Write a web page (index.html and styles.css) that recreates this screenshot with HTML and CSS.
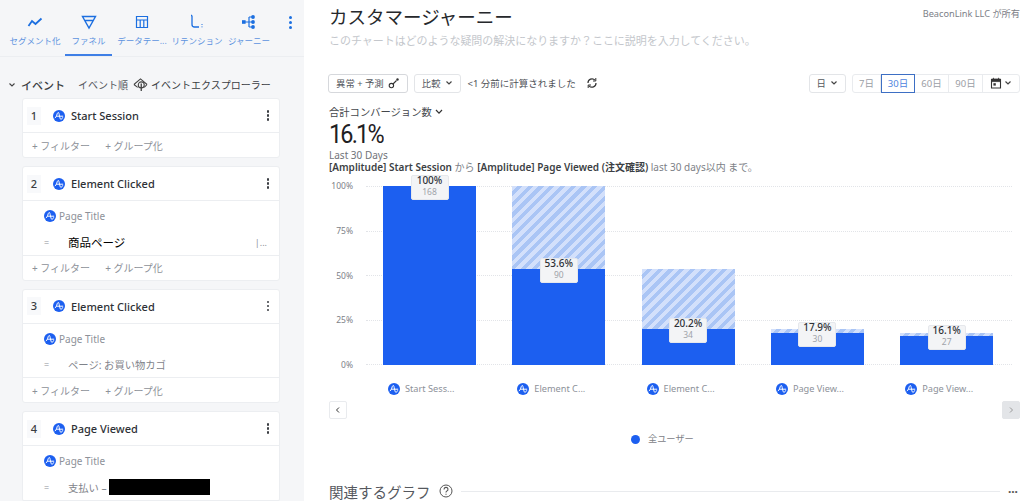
FILE: index.html
```html
<!DOCTYPE html>
<html lang="ja">
<head>
  <meta charset="UTF-8">
  <meta name="viewport" content="width=device-width, initial-scale=1.0">
  <title>カスタマージャーニー</title>
  <link rel="stylesheet" href="styles.css">
</head>
<body>
  <svg class="defs" width="0" height="0">
    <symbol id="amp" viewBox="0 0 12 12">
      <circle cx="6" cy="6" r="6" fill="#1c5ff0"/>
      <path d="M1.8 8 C3.6 8 4 2.4 5.2 2.4 C6.5 2.4 6.4 9.4 8 9.4 C9 9.4 9.2 7.6 10 7.2 M3.4 6.2 H10.2" fill="none" stroke="#fff" stroke-width="1"/>
    </symbol>
  </svg>

  <aside class="sidebar">
    <nav class="tabs">
      <div class="tab">
        <svg class="tab-icon" viewBox="0 0 16 16"><path d="M1.5 12 L5 7 L8.5 10 L14.5 4.5" fill="none" stroke="#1c6fe0" stroke-width="1.8"/></svg>
        <span>セグメント化</span>
      </div>
      <div class="tab active">
        <svg class="tab-icon" viewBox="0 0 16 16"><path d="M1.5 2.5 H14.5 L8 14 Z M4 6.5 H12" fill="none" stroke="#1c6fe0" stroke-width="1.4"/></svg>
        <span>ファネル</span>
      </div>
      <div class="tab">
        <svg class="tab-icon" viewBox="0 0 16 16"><path d="M2.5 2.5 H13.5 V13.5 H2.5 Z M2.5 6 H13.5 M6.2 6 V13.5 M9.8 6 V13.5" fill="none" stroke="#1c6fe0" stroke-width="1.2"/></svg>
        <span>データテー...</span>
      </div>
      <div class="tab">
        <svg class="tab-icon" viewBox="0 0 16 16"><path d="M2 1.5 H3 M3 1.5 V10.5 Q3 13 5.5 13 H10 M13 10.2 V11 M13 12.4 V13.2" fill="none" stroke="#1c6fe0" stroke-width="1.3"/></svg>
        <span>リテンション</span>
      </div>
      <div class="tab">
        <svg class="tab-icon" viewBox="0 0 16 16"><path d="M4 8 H8 M8 3 V13 M8 3 H11 M8 8 H11 M8 13 H11" fill="none" stroke="#1c6fe0" stroke-width="1.2"/><rect x="1" y="6.2" width="3.6" height="3.6" fill="#1c6fe0"/><circle cx="12" cy="3" r="1.9" fill="#1c6fe0"/><circle cx="12" cy="8" r="1.9" fill="#1c6fe0"/><circle cx="12" cy="13" r="1.9" fill="#1c6fe0"/></svg>
        <span>ジャーニー</span>
      </div>
      <div class="tab-more"><i></i><i></i><i></i></div>
    </nav>

    <div class="events-head">
      <svg class="chev" viewBox="0 0 8 8"><path d="M1.5 2.5 L4 5 L6.5 2.5" fill="none" stroke="#444" stroke-width="1.1"/></svg>
      <strong>イベント</strong>
      <span class="order">イベント順</span>
      <svg class="explore" viewBox="0 0 16 16"><path d="M1 8 L8 2 L15 8 M1 8 L5 11 M15 8 L12 11" fill="none" stroke="#444" stroke-width="1.1"/><circle cx="8.8" cy="8.4" r="3.2" fill="none" stroke="#444" stroke-width="1.1"/><path d="M8.8 7 V15" stroke="#444" stroke-width="1.4"/></svg>
      <span>イベントエクスプローラー</span>
    </div>

    <section class="card">
      <div class="card-head">
        <span class="step">1</span>
        <svg class="amp"><use href="#amp"/></svg>
        <span class="event-name">Start Session</span>
        <div class="dots"><i></i><i></i><i></i></div>
      </div>
      <div class="card-foot"><span>+ フィルター</span><span>+ グループ化</span></div>
    </section>

    <section class="card">
      <div class="card-head">
        <span class="step">2</span>
        <svg class="amp"><use href="#amp"/></svg>
        <span class="event-name">Element Clicked</span>
        <div class="dots"><i></i><i></i><i></i></div>
      </div>
      <div class="card-body">
        <div class="prop"><svg class="amp"><use href="#amp"/></svg><span>Page Title</span></div>
        <div class="cond">
          <span class="eq">=</span>
          <span class="value dark">商品ページ</span>
          <span class="more">|...</span>
        </div>
      </div>
      <div class="card-foot"><span>+ フィルター</span><span>+ グループ化</span></div>
    </section>

    <section class="card">
      <div class="card-head">
        <span class="step">3</span>
        <svg class="amp"><use href="#amp"/></svg>
        <span class="event-name">Element Clicked</span>
        <div class="dots"><i></i><i></i><i></i></div>
      </div>
      <div class="card-body">
        <div class="prop"><svg class="amp"><use href="#amp"/></svg><span>Page Title</span></div>
        <div class="cond">
          <span class="eq">=</span>
          <span class="value">ページ: お買い物カゴ</span>
        </div>
      </div>
      <div class="card-foot"><span>+ フィルター</span><span>+ グループ化</span></div>
    </section>

    <section class="card">
      <div class="card-head">
        <span class="step">4</span>
        <svg class="amp"><use href="#amp"/></svg>
        <span class="event-name">Page Viewed</span>
        <div class="dots"><i></i><i></i><i></i></div>
      </div>
      <div class="card-body">
        <div class="prop"><svg class="amp"><use href="#amp"/></svg><span>Page Title</span></div>
        <div class="cond">
          <span class="eq">=</span>
          <span class="value">支払い –</span>
          <span class="redacted"></span>
        </div>
      </div>
    </section>
  </aside>

  <main class="main">
    <div class="title-row">
      <h1>カスタマージャーニー</h1>
      <span class="owner">BeaconLink LLC が所有</span>
    </div>
    <p class="question">このチャートはどのような疑問の解決になりますか？ここに説明を入力してください。</p>

    <div class="controls">
      <button class="btn strong">異常 + 予測
        <svg class="ic" viewBox="0 0 12 12"><circle cx="3.4" cy="8.6" r="2.2" fill="none" stroke="#333" stroke-width="1.1"/><path d="M5 7 L8.5 3.5" stroke="#333" stroke-width="1.1"/><circle cx="9.5" cy="2.5" r="1.2" fill="#333"/></svg>
      </button>
      <button class="btn">比較
        <svg class="caret" viewBox="0 0 8 8"><path d="M1.5 2.5 L4 5 L6.5 2.5" fill="none" stroke="#444" stroke-width="1.2"/></svg>
      </button>
      <span class="computed">&lt;1 分前に計算されました</span>
      <svg class="refresh" viewBox="0 0 12 12"><path d="M2 6 A4 4 0 0 1 9 3.2 M10 6 A4 4 0 0 1 3 8.8" fill="none" stroke="#333" stroke-width="1.2"/><path d="M9.8 1 V4 H7 M2.2 11 V8 H5" fill="none" stroke="#333" stroke-width="1"/></svg>
      <div class="spacer"></div>
      <button class="btn">日
        <svg class="caret" viewBox="0 0 8 8"><path d="M1.5 2.5 L4 5 L6.5 2.5" fill="none" stroke="#444" stroke-width="1.2"/></svg>
      </button>
      <div class="range">
        <span>7日</span>
        <span class="on">30日</span>
        <span>60日</span>
        <span>90日</span>
        <span class="cal">
          <svg class="ic" viewBox="0 0 12 12"><path d="M1.5 2.5 H10.5 V11 H1.5 Z" fill="none" stroke="#333" stroke-width="1.1"/><path d="M1.5 2 H10.5 V4.6 H1.5 Z M3.5 .8 V2.4 M8.5 .8 V2.4" fill="#333" stroke="#333" stroke-width=".8"/><rect x="3.4" y="6.2" width="2.4" height="2.4" fill="#333"/></svg>
          <svg class="caret" viewBox="0 0 8 8"><path d="M1.5 2.5 L4 5 L6.5 2.5" fill="none" stroke="#444" stroke-width="1.2"/></svg>
        </span>
      </div>
    </div>

    <div class="metric-pick">合計コンバージョン数
      <svg class="caret" viewBox="0 0 8 8"><path d="M1 2 L4 5.2 L7 2" fill="none" stroke="#333" stroke-width="1.2"/></svg>
    </div>
    <div class="metric">16.1%</div>
    <div class="period">Last 30 Days</div>
    <div class="summary"><b>[Amplitude] Start Session</b> から <b>[Amplitude] Page Viewed (注文確認)</b> last 30 days以内 まで。</div>

    <div class="chart">
      <div class="y-axis">
        <span>100%</span><span>75%</span><span>50%</span><span>25%</span><span>0%</span>
      </div>
      <div class="plot">
        <div class="gridlines"><i></i><i></i><i></i><i></i><i></i></div>
        <div class="bars">
          <div class="col"><div class="ghost" style="height:100%"><div class="solid" style="height:100%"><div class="tip"><b>100%</b><span>168</span></div></div></div></div>
          <div class="col"><div class="ghost" style="height:100%"><div class="solid" style="height:53.6%"><div class="tip"><b>53.6%</b><span>90</span></div></div></div></div>
          <div class="col"><div class="ghost" style="height:53.6%"><div class="solid" style="height:37.7%"><div class="tip"><b>20.2%</b><span>34</span></div></div></div></div>
          <div class="col"><div class="ghost" style="height:20.2%"><div class="solid" style="height:88.6%"><div class="tip"><b>17.9%</b><span>30</span></div></div></div></div>
          <div class="col"><div class="ghost" style="height:17.9%"><div class="solid" style="height:89.9%"><div class="tip"><b>16.1%</b><span>27</span></div></div></div></div>
        </div>
        <div class="x-labels">
          <div><svg class="amp"><use href="#amp"/></svg>Start Sess...</div>
          <div><svg class="amp"><use href="#amp"/></svg>Element C...</div>
          <div><svg class="amp"><use href="#amp"/></svg>Element C...</div>
          <div><svg class="amp"><use href="#amp"/></svg>Page View...</div>
          <div><svg class="amp"><use href="#amp"/></svg>Page View...</div>
        </div>
      </div>
    </div>

    <div class="pager">
      <button class="page-btn"><svg viewBox="0 0 8 8"><path d="M5 1.5 L2.5 4 L5 6.5" fill="none" stroke="#333" stroke-width="1"/></svg></button>
      <button class="page-btn off"><svg viewBox="0 0 8 8"><path d="M3 1.5 L5.5 4 L3 6.5" fill="none" stroke="#999" stroke-width="1"/></svg></button>
    </div>

    <div class="legend"><i></i>全ユーザー</div>

    <div class="related">
      <span class="related-title">関連するグラフ</span>
      <svg class="help" viewBox="0 0 14 14"><circle cx="7" cy="7" r="6" fill="none" stroke="#555" stroke-width="1"/><path d="M5 5.4 A2 2 0 1 1 7.6 7.3 Q7 7.6 7 8.6 M7 9.8 V10.8" fill="none" stroke="#555" stroke-width="1.1"/></svg>
      <div class="rule"></div>
      <span class="related-more">...</span>
    </div>
  </main>
</body>
</html>
```

FILE: styles.css
```css
* {
  box-sizing: border-box;
}
html, body {
  height: 100%;
}
body {
  margin: 0;
  display: flex;
  height: 501px;
  overflow: hidden;
  background-color: #fff;
  color: #333;
  font-family: "Noto Sans", "Noto Sans CJK JP", sans-serif;
}
.defs {
  position: absolute;
}
button {
  font-family: inherit;
}
.amp {
  width: 12px;
  height: 12px;
  flex: none;
}

/* sidebar */
.sidebar {
  width: 304px;
  flex: none;
  background-color: #f5f6f8;
  overflow: hidden;
}
.tabs {
  height: 57px;
  display: flex;
  padding-left: 8px;
  border-bottom: 1px solid #eceef1;
}
.tab {
  width: 54px;
  height: 56px;
  display: flex;
  flex-direction: column;
  align-items: center;
  padding-top: 14px;
  color: #5d93df;
  font-size: 8.5px;
  white-space: nowrap;
}
.tab:nth-child(2) {
  width: 47px;
  margin-left: 3px;
  margin-right: 3px;
}
.tab:nth-child(4) {
  margin-left: 1px;
}
.tab:nth-child(5) {
  width: 50px;
}
.tab span {
  margin-top: 4px;
  line-height: 13px;
}
.tab.active {
  border-bottom: 2px solid #3f7fe6;
}
.tab-icon {
  width: 16px;
  height: 16px;
}
.tab-more {
  margin-left: 15px;
  padding-top: 16px;
  display: flex;
  flex-direction: column;
  gap: 2px;
}
.tab-more i {
  width: 3px;
  height: 3px;
  border-radius: 50%;
  background-color: #1c6fe0;
}
.events-head {
  height: 41px;
  padding: 14px 0 0 8px;
  display: flex;
  align-items: center;
  font-size: 10px;
  color: #3a3d42;
  white-space: nowrap;
}
.events-head strong {
  font-weight: 500;
  font-size: 11px;
  margin-left: 5px;
}
.chev {
  width: 8px;
  height: 8px;
}
.order {
  margin-left: 13px;
  color: #55585e;
}
.explore {
  width: 15px;
  height: 15px;
  margin: 0 3px 0 5px;
}
.card {
  width: 258px;
  margin: 0 0 8px 22px;
  background-color: #fff;
  border: 1px solid #eceef1;
  border-radius: 3px;
}
.card-head {
  height: 34px;
  display: flex;
  align-items: center;
  padding: 0 9px 0 4px;
  border-bottom: 1px solid #eceef1;
}
.step {
  width: 14px;
  text-align: center;
  font-size: 11px;
  font-weight: 500;
  margin-right: 12px;
  color: #3a3d42;
  background-color: #f8f9fb;
  line-height: 18px;
}
.event-name {
  flex: 1;
  margin-left: 6px;
  font-size: 11px;
  font-weight: 500;
  color: #2e3136;
}
.dots {
  display: flex;
  flex-direction: column;
  gap: 1.5px;
  margin-right: 1px;
}
.dots i {
  width: 2.5px;
  height: 2.5px;
  border-radius: 50%;
  background-color: #3a3d42;
}
.card-body {
  height: 54.5px;
  padding: 8px 11px 0 21px;
  border-bottom: 1px solid #eceef1;
  color: #8d9199;
  font-size: 10px;
}
.prop {
  display: flex;
  align-items: center;
  gap: 3px;
  height: 14px;
}
.cond {
  display: flex;
  align-items: center;
  height: 24px;
  margin-top: 7px;
}
.eq {
  width: 24px;
  font-size: 9px;
}
.value {
  color: #7f838a;
  font-size: 10.3px;
}
.value.dark {
  color: #000;
  font-size: 11.5px;
  flex: 1;
}
.more {
  font-size: 9px;
  margin-right: 1px;
}
.redacted {
  width: 101px;
  height: 16px;
  margin-left: 2px;
  background-color: #000;
}
.card-foot {
  height: 24px;
  display: flex;
  align-items: center;
  gap: 15px;
  padding-left: 9px;
  font-size: 10px;
  color: #8d9199;
}

/* main */
.main {
  flex: 1;
  min-width: 0;
  padding: 0 14px 0 25px;
}
.title-row {
  display: flex;
  justify-content: space-between;
  align-items: flex-start;
  padding-top: 2px;
}
h1 {
  margin: 0;
  font-size: 18.5px;
  font-weight: 400;
  line-height: 29px;
  color: #26282c;
}
.owner {
  font-size: 9.2px;
  color: #7c8087;
  margin-top: 4px;
}
.question {
  margin: 2px 0 0;
  font-size: 11px;
  line-height: 16px;
  letter-spacing: -.04px;
  color: #c4c7cc;
}
.controls {
  display: flex;
  align-items: center;
  margin-top: 24px;
  height: 20px;
}
.btn {
  height: 19px;
  display: flex;
  align-items: center;
  gap: 4px;
  margin: 0 6px 0 0;
  padding: 0 7px;
  border: 1px solid #e3e5e8;
  border-radius: 3px;
  background-color: #fff;
  font-size: 9.4px;
  color: #55585e;
}
.btn.strong {
  margin-left: -1px;
  border-color: #d6d8dc;
}
.ic {
  width: 12px;
  height: 12px;
}
.caret {
  width: 8px;
  height: 8px;
}
.computed {
  margin-left: 1px;
  font-size: 9.5px;
  color: #4e5157;
}
.refresh {
  width: 12px;
  height: 12px;
  margin-left: 10px;
}
.spacer {
  flex: 1;
}
.range {
  display: flex;
  height: 19px;
  border: 1px solid #e9ebee;
  border-radius: 3px;
  font-size: 9.5px;
  color: #9b9ea5;
}
.range span {
  width: 34px;
  display: flex;
  align-items: center;
  justify-content: center;
  border-right: 1px solid #e9ebee;
}
.range span:first-child {
  width: 28px;
}
.range .on {
  color: #4e84de;
  border: 1px solid #3d6fc4;
  margin: -1px 0;
  height: 19px;
}
.range .cal {
  width: 36px;
  border-right: none;
  gap: 2px;
}
.metric-pick {
  margin-top: 11px;
  display: flex;
  align-items: center;
  gap: 3px;
  font-size: 10.3px;
  line-height: 16px;
  color: #44474c;
}
.metric {
  width: max-content;
  margin-top: 1px;
  font-family: Roboto, "Noto Sans", sans-serif;
  font-size: 26px;
  line-height: 27px;
  letter-spacing: -2px;
  transform: scaleX(.9);
  transform-origin: left;
  color: #1e2023;
}
.period {
  margin-top: 1px;
  font-size: 10px;
  line-height: 12px;
  color: #6f7379;
}
.summary {
  font-size: 10px;
  line-height: 13px;
  color: #7d8187;
  white-space: nowrap;
}
.summary b {
  color: #3c3f44;
  font-weight: 600;
}

/* chart */
.chart {
  display: flex;
  margin-top: 12px;
}
.y-axis {
  width: 24px;
  height: 190px;
  margin-top: -6px;
  display: flex;
  flex-direction: column;
  justify-content: space-between;
  align-items: flex-end;
  font-size: 8.5px;
  line-height: 11px;
  color: #7d8187;
}
.plot {
  position: relative;
  width: 646px;
  margin-left: 13px;
}
.gridlines {
  position: absolute;
  top: 0;
  left: 0;
  right: 0;
  height: 179px;
  display: flex;
  flex-direction: column;
  justify-content: space-between;
}
.gridlines i {
  display: block;
  border-top: 1px dotted #e2e4e8;
}
.bars {
  position: relative;
  height: 179px;
  display: flex;
  gap: 36.3px;
  padding-left: 17px;
}
.col {
  width: 93px;
  display: flex;
  flex-direction: column;
  justify-content: flex-end;
}
.ghost {
  display: flex;
  flex-direction: column;
  justify-content: flex-end;
  background-image: repeating-linear-gradient(135deg, #d3e0fb 0, #d3e0fb 3.8px, #aac5f5 3.8px, #aac5f5 7.6px);
}
.solid {
  position: relative;
  background-color: #1c5ff0;
}
.tip {
  position: absolute;
  top: -11px;
  left: 50%;
  transform: translateX(-50%);
  width: 38px;
  height: 25px;
  background-color: #f3f4f6;
  border: 1px solid #e6e8ec;
  border-radius: 2px;
  display: flex;
  flex-direction: column;
  align-items: center;
  color: #a0a3a9;
  font-size: 8.5px;
  line-height: 11px;
}
.tip b {
  margin-top: -1px;
  font-size: 10px;
  font-weight: 500;
  line-height: 10px;
  color: #2e3136;
}
.tip span {
  margin-top: 1px;
}
.x-labels {
  display: flex;
  gap: 36.3px;
  padding-left: 17px;
  margin-top: 17px;
}
.x-labels div {
  width: 93px;
  padding-left: 5px;
  display: flex;
  align-items: center;
  gap: 5px;
  font-size: 9.2px;
  line-height: 14px;
  color: #8d9199;
  white-space: nowrap;
}
.pager {
  display: flex;
  justify-content: space-between;
  margin-top: 5px;
}
.page-btn {
  width: 18px;
  height: 18px;
  padding: 4px;
  display: flex;
  background-color: #fff;
  border: 1px solid #e9ebee;
  border-radius: 2px;
}
.page-btn.off {
  background-color: #e3e5e8;
  border-color: #e3e5e8;
}
.legend {
  margin-top: 13px;
  padding-left: 302px;
  display: flex;
  align-items: center;
  gap: 8px;
  font-size: 9.2px;
  line-height: 14px;
  color: #7d8187;
}
.legend i {
  width: 9px;
  height: 9px;
  border-radius: 50%;
  background-color: #1c5ff0;
}
.related {
  margin-top: 34px;
  display: flex;
  align-items: center;
  height: 22px;
}
.related-title {
  font-size: 14.5px;
  color: #55585e;
}
.help {
  width: 14px;
  height: 14px;
  margin-left: 8px;
}
.rule {
  flex: 1;
  margin: 0 8px 0 8px;
  border-top: 1px solid #e9ebee;
}
.related-more {
  font-size: 12px;
  font-weight: 700;
  color: #555;
  margin: -6px 2px 0 0;
}
```
